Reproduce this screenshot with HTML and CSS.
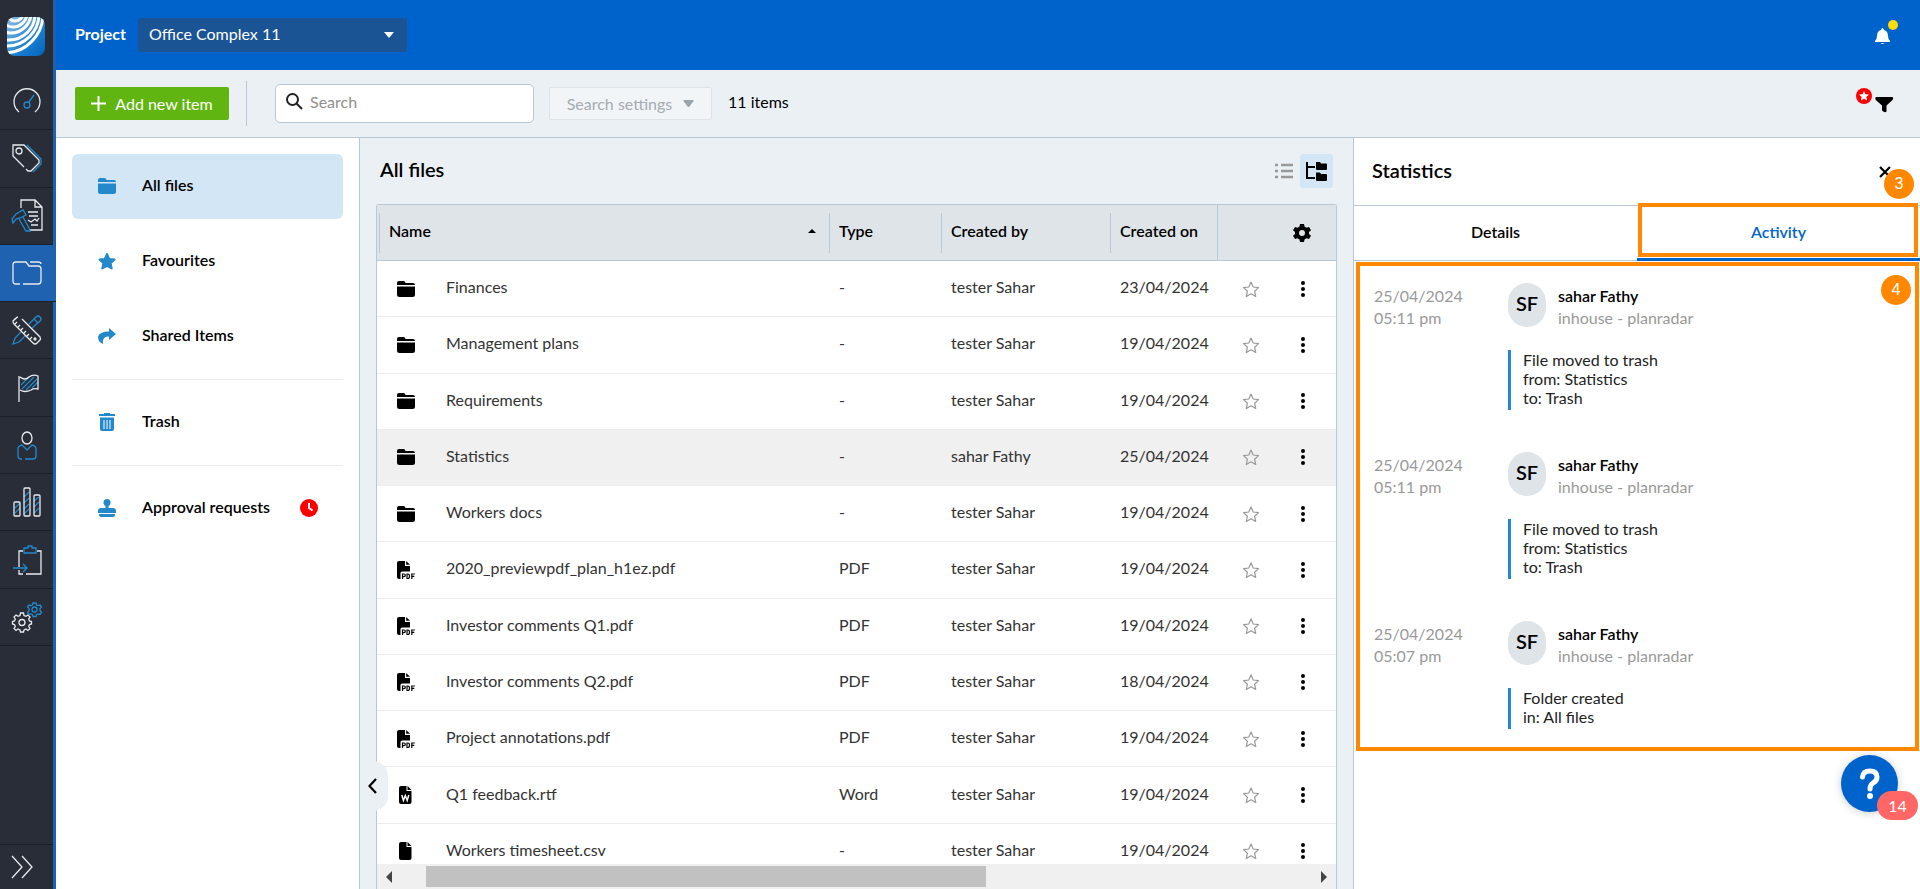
FILE: index.html
```html
<!DOCTYPE html>
<html lang="en">
<head>
    <meta charset="UTF-8">
    <meta name="viewport" content="width=device-width, initial-scale=1.0">
    <title>Office Complex 11 - All files</title>
    <link rel="stylesheet" href="styles.css">
</head>
<body>

<!-- shared icons -->
<svg class="sprite" aria-hidden="true">
    <symbol id="i-folder" viewBox="0 0 18 16">
        <path d="M0 4V2Q0 0 2 0H6.500Q7.500 0 8 1L8.500 2H16Q18 2 18 4Z"/>
        <path d="M0 5.500H18V13.500Q18 16 15.500 16H2.500Q0 16 0 13.500Z"/>
    </symbol>
    <symbol id="i-pdf" viewBox="0 0 18 18">
        <path d="M2 0H8V5H13V10.500H5Q3.500 10.500 3.500 12V18H2Q0 18 0 16V2Q0 0 2 0Z"/>
        <path d="M9.200 0L13 3.800H9.200Z"/>
        <path d="M5.500 18V13H7Q8.300 13 8.300 14.300Q8.300 15.600 7 15.600H5.500M10 13H11Q12.500 13 12.500 15.200Q12.500 17.500 11 17.500H10ZM14.800 18V13H17.800M14.800 15.300H17.300" fill="none" stroke="#000" stroke-width="1.200"/>
    </symbol>
    <symbol id="i-word" viewBox="0 0 18 18">
        <path d="M4 0H9.500V5H14.500V16Q14.500 18 12.500 18H4Q2 18 2 16V2Q2 0 4 0Z"/>
        <path d="M10.500 0L14.500 4H10.500Z"/>
        <path d="M4.800 9L6.400 14.500L8.300 9.500L10.200 14.500L11.800 9" fill="none" stroke="#fff" stroke-width="1.500"/>
    </symbol>
    <symbol id="i-file" viewBox="0 0 18 18">
        <path d="M4 0H9.500V5H14.500V16Q14.500 18 12.500 18H4Q2 18 2 16V2Q2 0 4 0Z"/>
        <path d="M10.500 0L14.500 4H10.500Z"/>
    </symbol>
    <symbol id="i-star" viewBox="0 0 18 18">
        <path d="M9 2L11.200 7L16.500 7.600L12.600 11.200L13.700 16.500L9 13.800L4.300 16.500L5.400 11.200L1.500 7.600L6.800 7Z" stroke-linejoin="round"/>
    </symbol>
    <symbol id="i-dots" viewBox="0 0 6 16">
        <circle cx="3" cy="2" r="2"/><circle cx="3" cy="8" r="2"/><circle cx="3" cy="14" r="2"/>
    </symbol>
    <symbol id="i-gear" viewBox="0 0 18 18">
        <path fill-rule="evenodd" d="M7 0H11L11.500 2.600L13.500 3.700L16 2.900L18 6.200L16 8V10L18 11.800L16 15.100L13.500 14.300L11.500 15.400L11 18H7L6.500 15.400L4.500 14.300L2 15.100L0 11.800L2 10V8L0 6.200L2 2.900L4.500 3.700L6.500 2.600ZM9 6A3 3 0 1 0 9 12A3 3 0 1 0 9 6Z"/>
    </symbol>
</svg>

<div class="app">
    <nav class="sidebar" aria-label="Main">
        <a class="logo" href="#" aria-label="Home">
            <svg width="38" height="39" viewBox="0 0 38 39">
                <defs>
                    <clipPath id="logoClip"><rect width="38" height="39" rx="8"/></clipPath>
                    <linearGradient id="logoFill" x1="0" y1="0" x2="1" y2="1">
                        <stop offset="0" stop-color="#8fc0e8"/><stop offset="0.600" stop-color="#1a7fcf"/><stop offset="1" stop-color="#0064c0"/>
                    </linearGradient>
                </defs>
                <g clip-path="url(#logoClip)">
                    <rect width="38" height="39" fill="url(#logoFill)"/>
                    <g fill="none" stroke="#fff" stroke-width="3">
                        <circle cx="8" cy="-4" r="8"/>
                        <circle cx="6" cy="-4" r="14"/>
                        <circle cx="4" cy="-4" r="20"/>
                        <circle cx="2" cy="-3" r="26"/>
                        <circle cx="0" cy="-3" r="32"/>
                        <circle cx="-3" cy="-3" r="39"/>
                    </g>
                </g>
            </svg>
        </a>
        <ul class="menu">
            <li><a href="#" aria-label="Dashboard"><svg width="30" height="30" viewBox="0 0 30 30">
                <path d="M7 26A13 13 0 1 1 23 26M4.500 23L6 25"/>
                <g class="blue"><circle cx="15" cy="19" r="3"/><path d="M16.500 16.500L22 9"/></g></svg></a></li>
            <li><a href="#" aria-label="Tickets"><svg width="30" height="30" viewBox="0 0 30 30">
                <path d="M12 24L1 13V2H12L27 17V20L19 28H16L14 26"/><circle cx="7" cy="8" r="3"/>
                <g class="blue"><path d="M15 2L29 16V21L21 29"/></g></svg></a></li>
            <li><a href="#" aria-label="Defects"><svg width="32" height="32" viewBox="0 0 32 32">
                <path d="M10 8V0H24L31 7V30H19M24 0V7H31M17 12H27M18 16H27M17 20L20 22L24 19L26 21L28 18M20 25H27"/>
                <g class="blue"><path d="M1 19L5 14L12 10L15 15L9 18L5 19L2 23ZM8 19L15 31L19 31L18 28L12 17"/></g></svg></a></li>
            <li class="active"><a href="#" aria-label="Files"><svg width="30" height="30" viewBox="0 0 30 30">
                <path d="M8 26H4Q1 26 1 23V7Q1 4 4 4H14L17 8H26Q29 8 29 11V23Q29 26 26 26H11M18 4H26Q29 4 29 6"/></svg></a></li>
            <li><a href="#" aria-label="Plans"><svg width="30" height="30" viewBox="0 0 30 30">
                <g class="blue"><path d="M17 9L24 2Q26 0 28 2Q30 4 28 6L20 13M9 17L3 23L1 29L7 27L13 21M22 4L26 8"/></g>
                <path d="M6 2Q5 2 1 6Q1 8 2 9L21 28Q23 30 25 28L28 25Q29 24 28 22L10 4M3 9L5 7M6 12L8 10M9 15L11 13M12 18L14 16M15 21L17 19M18 24L20 22"/><circle cx="23" cy="24" r="1"/></svg></a></li>
            <li><a href="#" aria-label="Tasks"><svg width="30" height="30" viewBox="0 0 30 30">
                <g class="blue"><path d="M9 12L17 4M10 16L22 4M14 17L25 6M20 15L26 9"/></g>
                <path d="M7 29V3M8 4Q13 8 17 4Q21 1 26 3V16Q22 15 19 17Q13 20 8 17"/></svg></a></li>
            <li><a href="#" aria-label="Users"><svg width="30" height="30" viewBox="0 0 30 30">
                <ellipse cx="15" cy="8" rx="5" ry="6"/>
                <g class="blue"><path d="M10 29H9Q6 29 6 26V19Q6 16 10 15L15 20L20 15Q24 16 24 19V26Q24 29 21 29H13"/></g></svg></a></li>
            <li><a href="#" aria-label="Statistics"><svg width="30" height="30" viewBox="0 0 30 30">
                <g class="blue"><path d="M3 21L8 16M3 26L8 21M12 10L17 5M12 16L17 11M12 22L17 17M12 27L17 22M22 14L27 10M22 20L27 15M22 26L27 21"/></g>
                <rect x="2" y="15" width="6" height="14" rx="1"/><rect x="12" y="1" width="6" height="28" rx="1"/><rect x="22" y="8" width="6" height="21" rx="1"/></svg></a></li>
            <li><a href="#" aria-label="Export"><svg width="30" height="30" viewBox="0 0 30 30">
                <path d="M11 6H7V22M7 25V29H11M14 29H29V6H25"/>
                <g class="blue"><path d="M12 3H16V1H20V3H24V8H12ZM1 23H14M11 19L15 23L11 27"/></g></svg></a></li>
            <li><a href="#" aria-label="Settings"><svg width="30" height="30" viewBox="0 0 30 30">
                <path d="M8.500 11H11.500L12 13.500L14 14.300L16 13L18 15L16.700 17L17.500 19L19.500 19.500V22L17.500 22.500L16.700 24.500L18 26.500L16 28.500L14 27L12 28L11.500 30H8.500L8 28L6 27L4 28.500L2 26.500L3.300 24.500L2.500 22.500L0.500 22V19.500L2.500 19L3.300 17L2 15L4 13L6 14.300L8 13.500Z"/><circle cx="10" cy="20.500" r="3"/>
                <g class="blue"><path d="M21 1H24L24.500 3L26 3.500L28 3L29.500 5L28 6.500V8.500L29.500 10.500L28 12.500L26 12L24.500 12.500L24 14.500H21L20.500 12.500L19 12L17 12.500L15.500 10.500L17 8.500V6.500L15.500 5L17 3L19 3.500L20.500 3Z"/><circle cx="22.500" cy="7.500" r="2.500"/></g></svg></a></li>
        </ul>
        <button class="expand" type="button" aria-label="Expand menu">
            <svg width="24" height="24" viewBox="0 0 24 24"><path d="M2 1L12 12L2 23M12 1L22 12L12 23"/></svg>
        </button>
    </nav>

    <div class="page">
        <header class="header">
            <label for="project">Project</label>
            <div class="select-wrap">
                <select id="project"><option>Office Complex 11</option></select>
                <svg width="10" height="6" viewBox="0 0 10 6"><path d="M0 0H10L5 6Z"/></svg>
            </div>
            <button class="bell" type="button" aria-label="Notifications">
                <svg width="23" height="25" viewBox="0 0 23 25">
                    <path d="M7.500 8Q8.500 8 9 10Q13 11 13 16Q13 19 15 21V22H0V21Q2 19 2 16Q2 11 6 10Q6.500 8 7.500 8ZM5.500 23H9.500Q7.500 25 5.500 23Z" fill="#fff"/>
                    <circle cx="18" cy="5" r="5" fill="#ffdb0a"/>
                </svg>
            </button>
        </header>

        <div class="toolbar">
            <button class="add" type="button">
                <svg width="15" height="15" viewBox="0 0 15 15"><path d="M7.500 0V15M0 7.500H15" stroke="#fff" stroke-width="2"/></svg>
                Add new item
            </button>
            <span class="split"></span>
            <label class="search">
                <svg width="17" height="17" viewBox="0 0 17 17"><circle cx="6.500" cy="6.500" r="5.500"/><path d="M10.500 10.500L16 16"/></svg>
                <input type="text" placeholder="Search" aria-label="Search">
            </label>
            <button class="settings" type="button" disabled>
                Search settings
                <svg width="11" height="7" viewBox="0 0 11 7"><path d="M1 0H10Q11 0 10.500 1L6.500 6.500Q5.500 7.500 4.500 6.500L0.500 1Q0 0 1 0Z" fill="#9aa2aa"/></svg>
            </button>
            <span class="total">11 items</span>
            <button class="filter" type="button" aria-label="Filter">
                <svg width="38" height="26" viewBox="0 0 38 26">
                    <circle cx="8" cy="8" r="8" fill="#f00"/>
                    <path d="M8 3L9.500 6.200L13 6.600L10.400 9L11.100 12.500L8 10.800L4.900 12.500L5.600 9L3 6.600L6.500 6.200Z" fill="#fff"/>
                    <path d="M20 9H36.500Q38 10 36.500 12L30.500 17.500V23.500Q29 25.500 26 22.500V17.500L19.800 12Q18.500 10 20 9Z"/>
                </svg>
            </button>
        </div>

        <div class="content">
            <aside class="folders">
                <a class="folder current" href="#"><svg width="18" height="16"><use href="#i-folder"/></svg><span>All files</span></a>
                <a class="folder" href="#"><svg class="solid" width="18" height="18"><use href="#i-star"/></svg><span>Favourites</span></a>
                <a class="folder" href="#"><svg width="18" height="16" viewBox="0 0 18 16"><path d="M11 0L18 6L11 12V8.500Q4 8 5 16Q0 14 0 9Q1 3.500 11 3.500Z"/></svg><span>Shared Items</span></a>
                <hr>
                <a class="folder" href="#"><svg width="18" height="18" viewBox="0 0 18 18"><path d="M1 1H6V0H12V1H17V3H1Z"/><path d="M2 4.500H16V16Q16 18 14 18H4Q2 18 2 16Z"/><path d="M6 7V16M9 7V16M12 7V16" stroke="#fff" stroke-width="1"/></svg><span>Trash</span></a>
                <hr>
                <a class="folder" href="#"><svg width="18" height="18" viewBox="0 0 18 18"><circle cx="9" cy="3.500" r="3.500"/><path d="M7.500 5H10.500V9H15Q18 9 18 12V14H0V12Q0 9 3 9H7.500ZM1 15H17V16Q17 18 15 18H3Q1 18 1 16Z"/></svg><span>Approval requests</span>
                    <svg class="clock" width="18" height="18" viewBox="0 0 18 18"><circle cx="9" cy="9" r="9" fill="#f00"/><path d="M9 4V9L12.500 11.500" fill="none" stroke="#fff" stroke-width="2"/></svg></a>
            </aside>

            <main class="files">
                <button class="collapse" type="button" aria-label="Hide folders">
                    <svg width="9" height="16" viewBox="0 0 9 16"><path d="M8 1L1.500 8L8 15"/></svg>
                </button>
                <div class="files-head">
                    <h1>All files</h1>
                    <button class="view" type="button" aria-label="List view">
                        <svg width="18" height="16" viewBox="0 0 18 16"><path d="M0 2H3M6 2H18M0 8H3M6 8H18M0 14H3M6 14H18" stroke="#999" stroke-width="2.500"/></svg>
                    </button>
                    <button class="view on" type="button" aria-label="Tree view">
                        <svg width="21" height="19" viewBox="0 0 21 19"><path d="M1 0V16H9M1 5H9" fill="none" stroke="#000" stroke-width="2"/><path d="M10 0H14L15 1.500H20Q21 1.500 21 2.500V7Q21 8 20 8H11Q10 8 10 7ZM10 10.500H14L15 12H20Q21 12 21 13V18Q21 19 20 19H11Q10 19 10 18Z"/></svg>
                    </button>
                </div>
                <div class="grid">
                    <div class="grid-body">
                        <table>
                            <colgroup><col class="c-icon"><col><col class="c-type"><col class="c-by"><col class="c-on"><col class="c-star"><col class="c-menu"></colgroup>
                            <thead>
                                <tr>
                                    <th colspan="2"><span class="th">Name <svg width="8" height="4" viewBox="0 0 8 4"><path d="M0 4H8L4 0Z"/></svg></span></th>
                                    <th><span class="th">Type</span></th>
                                    <th><span class="th">Created by</span></th>
                                    <th><span class="th">Created on</span></th>
                                    <th class="actions" colspan="2"><button type="button" aria-label="Columns"><svg width="18" height="18"><use href="#i-gear"/></svg></button></th>
                                </tr>
                            </thead>
                            <tbody>
                                <tr><td class="ico"><svg width="18" height="16"><use href="#i-folder"/></svg></td><td>Finances</td><td>-</td><td>tester Sahar</td><td>23/04/2024</td>
                                    <td class="act"><button type="button" aria-label="Favourite"><svg class="star" width="18" height="18"><use href="#i-star"/></svg></button></td><td class="act more"><button type="button" aria-label="More"><svg width="6" height="16"><use href="#i-dots"/></svg></button></td></tr>
                                <tr><td class="ico"><svg width="18" height="16"><use href="#i-folder"/></svg></td><td>Management plans</td><td>-</td><td>tester Sahar</td><td>19/04/2024</td>
                                    <td class="act"><button type="button" aria-label="Favourite"><svg class="star" width="18" height="18"><use href="#i-star"/></svg></button></td><td class="act more"><button type="button" aria-label="More"><svg width="6" height="16"><use href="#i-dots"/></svg></button></td></tr>
                                <tr><td class="ico"><svg width="18" height="16"><use href="#i-folder"/></svg></td><td>Requirements</td><td>-</td><td>tester Sahar</td><td>19/04/2024</td>
                                    <td class="act"><button type="button" aria-label="Favourite"><svg class="star" width="18" height="18"><use href="#i-star"/></svg></button></td><td class="act more"><button type="button" aria-label="More"><svg width="6" height="16"><use href="#i-dots"/></svg></button></td></tr>
                                <tr class="selected"><td class="ico"><svg width="18" height="16"><use href="#i-folder"/></svg></td><td>Statistics</td><td>-</td><td>sahar Fathy</td><td>25/04/2024</td>
                                    <td class="act"><button type="button" aria-label="Favourite"><svg class="star" width="18" height="18"><use href="#i-star"/></svg></button></td><td class="act more"><button type="button" aria-label="More"><svg width="6" height="16"><use href="#i-dots"/></svg></button></td></tr>
                                <tr><td class="ico"><svg width="18" height="16"><use href="#i-folder"/></svg></td><td>Workers docs</td><td>-</td><td>tester Sahar</td><td>19/04/2024</td>
                                    <td class="act"><button type="button" aria-label="Favourite"><svg class="star" width="18" height="18"><use href="#i-star"/></svg></button></td><td class="act more"><button type="button" aria-label="More"><svg width="6" height="16"><use href="#i-dots"/></svg></button></td></tr>
                                <tr><td class="ico"><svg width="18" height="18"><use href="#i-pdf"/></svg></td><td>2020_previewpdf_plan_h1ez.pdf</td><td>PDF</td><td>tester Sahar</td><td>19/04/2024</td>
                                    <td class="act"><button type="button" aria-label="Favourite"><svg class="star" width="18" height="18"><use href="#i-star"/></svg></button></td><td class="act more"><button type="button" aria-label="More"><svg width="6" height="16"><use href="#i-dots"/></svg></button></td></tr>
                                <tr><td class="ico"><svg width="18" height="18"><use href="#i-pdf"/></svg></td><td>Investor comments Q1.pdf</td><td>PDF</td><td>tester Sahar</td><td>19/04/2024</td>
                                    <td class="act"><button type="button" aria-label="Favourite"><svg class="star" width="18" height="18"><use href="#i-star"/></svg></button></td><td class="act more"><button type="button" aria-label="More"><svg width="6" height="16"><use href="#i-dots"/></svg></button></td></tr>
                                <tr><td class="ico"><svg width="18" height="18"><use href="#i-pdf"/></svg></td><td>Investor comments Q2.pdf</td><td>PDF</td><td>tester Sahar</td><td>18/04/2024</td>
                                    <td class="act"><button type="button" aria-label="Favourite"><svg class="star" width="18" height="18"><use href="#i-star"/></svg></button></td><td class="act more"><button type="button" aria-label="More"><svg width="6" height="16"><use href="#i-dots"/></svg></button></td></tr>
                                <tr><td class="ico"><svg width="18" height="18"><use href="#i-pdf"/></svg></td><td>Project annotations.pdf</td><td>PDF</td><td>tester Sahar</td><td>19/04/2024</td>
                                    <td class="act"><button type="button" aria-label="Favourite"><svg class="star" width="18" height="18"><use href="#i-star"/></svg></button></td><td class="act more"><button type="button" aria-label="More"><svg width="6" height="16"><use href="#i-dots"/></svg></button></td></tr>
                                <tr><td class="ico"><svg width="18" height="18"><use href="#i-word"/></svg></td><td>Q1 feedback.rtf</td><td>Word</td><td>tester Sahar</td><td>19/04/2024</td>
                                    <td class="act"><button type="button" aria-label="Favourite"><svg class="star" width="18" height="18"><use href="#i-star"/></svg></button></td><td class="act more"><button type="button" aria-label="More"><svg width="6" height="16"><use href="#i-dots"/></svg></button></td></tr>
                                <tr><td class="ico"><svg width="18" height="18"><use href="#i-file"/></svg></td><td>Workers timesheet.csv</td><td>-</td><td>tester Sahar</td><td>19/04/2024</td>
                                    <td class="act"><button type="button" aria-label="Favourite"><svg class="star" width="18" height="18"><use href="#i-star"/></svg></button></td><td class="act more"><button type="button" aria-label="More"><svg width="6" height="16"><use href="#i-dots"/></svg></button></td></tr>
                            </tbody>
                        </table>
                    </div>
                    <div class="scrollbar">
                        <svg width="6" height="12" viewBox="0 0 6 12"><path d="M6 0V12L0 6Z"/></svg>
                        <div class="track"><div class="thumb"></div></div>
                        <svg width="6" height="12" viewBox="0 0 6 12"><path d="M0 0V12L6 6Z"/></svg>
                    </div>
                </div>
            </main>

            <section class="details">
                <div class="details-head">
                    <h2>Statistics</h2>
                    <button type="button" aria-label="Close"><svg width="12" height="12" viewBox="0 0 12 12"><path d="M1 1L11 11M11 1L1 11"/></svg></button>
                </div>
                <div class="tabs">
                    <button type="button">Details</button>
                    <button class="active" type="button">Activity<span class="mark mark-tab"></span></button>
                </div>
                <span class="step step-3">3</span>
                <div class="activity">
                    <span class="mark"></span>
                    <span class="step step-4">4</span>
                    <article class="entry">
                        <div class="when">25/04/2024<br>05:11 pm</div>
                        <div class="avatar">SF</div>
                        <div class="who"><b>sahar Fathy</b><br>inhouse - planradar</div>
                        <p>File moved to trash<br>from: Statistics<br>to: Trash</p>
                    </article>
                    <article class="entry">
                        <div class="when">25/04/2024<br>05:11 pm</div>
                        <div class="avatar">SF</div>
                        <div class="who"><b>sahar Fathy</b><br>inhouse - planradar</div>
                        <p>File moved to trash<br>from: Statistics<br>to: Trash</p>
                    </article>
                    <article class="entry">
                        <div class="when">25/04/2024<br>05:07 pm</div>
                        <div class="avatar">SF</div>
                        <div class="who"><b>sahar Fathy</b><br>inhouse - planradar</div>
                        <p>Folder created<br>in: All files</p>
                    </article>
                </div>
            </section>
        </div>
    </div>
</div>

<button class="help" type="button" aria-label="Help, 14 new">
    <svg width="20" height="30" viewBox="0 0 20 30"><path d="M2.500 8Q3 2 10 2Q17 2 17 8Q17 12 13 14Q10 16 10 20" fill="none" stroke="#fff" stroke-width="5" stroke-linecap="round"/><circle cx="10" cy="27" r="3" fill="#fff"/></svg>
    <span class="count">14</span>
</button>

</body>
</html>
```
FILE: styles.css
```css
* {
    box-sizing: border-box;
}
body {
    margin: 0;
    font-family: Lato, "Liberation Sans", sans-serif;
    font-size: 16px;
    line-height: 22px;
    color: #000;
    background: #ebf0f5;
}
button, input, select {
    font: inherit;
    color: inherit;
    border: none;
    background: none;
    padding: 0;
    margin: 0;
}
button {
    cursor: pointer;
}
svg {
    display: block;
    overflow: visible;
    flex: none;
}
a {
    color: inherit;
    text-decoration: none;
}
h1, h2 {
    margin: 0;
    padding-bottom: 4px;
    font-size: 20px;
    line-height: 24px;
    font-weight: 600;
}
.sprite {
    position: absolute;
    width: 0;
    height: 0;
}
.app {
    display: flex;
    height: 100vh;
    overflow: hidden;
}

/* left icon bar */
.sidebar {
    width: 56px;
    flex: none;
    display: flex;
    flex-direction: column;
    background: #282d38;
    border-right: 3px solid #1f63b0;
}
.logo {
    height: 73px;
    padding: 17px 0 0 7px;
}
.menu {
    list-style: none;
    margin: 0;
    padding: 0;
    height: 573px;
    display: flex;
    flex-direction: column;
}
.menu li {
    flex: 1;
    border-bottom: 1px solid #1b1f28;
}
.menu a {
    height: 100%;
    width: 53px;
    display: flex;
    align-items: center;
    justify-content: center;
}
.menu svg, .expand svg {
    fill: none;
    stroke: #e8eaee;
    stroke-width: 1.3;
}
.menu .blue {
    stroke: #2389cb;
}
.menu .active {
    background: #1f63b0;
    margin-right: -3px;
}
.expand {
    margin-top: auto;
    height: 45px;
    border-top: 1px solid #1b1f28;
    padding-left: 10px;
}

/* header */
.page {
    flex: 1;
    min-width: 0;
    display: flex;
    flex-direction: column;
}
.header {
    height: 70px;
    flex: none;
    padding: 0 22px 0 19px;
    display: flex;
    align-items: center;
    gap: 12px;
    background: #0063cc;
    color: #fff;
}
.header label {
    font-weight: 700;
    padding-bottom: 2px;
}
.select-wrap {
    width: 269px;
    height: 34px;
    padding: 0 13px 0 11px;
    display: flex;
    align-items: center;
    background: #1a5494;
    border-radius: 3px;
    fill: #fff;
}
.select-wrap select {
    flex: 1;
    appearance: none;
    padding-bottom: 2px;
}
.select-wrap option {
    color: #000;
}
.bell {
    margin-left: auto;
    height: 30px;
    display: flex;
}

/* toolbar */
.toolbar {
    height: 68px;
    flex: none;
    padding: 0 26px 0 19px;
    display: flex;
    align-items: center;
    border-bottom: 1px solid #bac7d5;
}
.add {
    width: 154px;
    height: 33px;
    display: flex;
    align-items: center;
    justify-content: center;
    gap: 9px;
    background: #61b510;
    color: #fff;
    border-radius: 2px;
}
.split {
    width: 1px;
    height: 45px;
    margin: 0 28px 0 17px;
    background: #bac7d5;
}
.search {
    width: 259px;
    height: 39px;
    padding: 0 10px 4px;
    margin-right: 15px;
    display: flex;
    align-items: center;
    gap: 7px;
    background: #fff;
    border: 1px solid #bac7d5;
    border-radius: 5px;
}
.search svg {
    fill: none;
    stroke: #222;
    stroke-width: 2;
}
.search input {
    flex: 1;
    min-width: 0;
    outline: none;
}
.search input::placeholder {
    color: #8f8f8f;
}
.settings {
    width: 163px;
    height: 33px;
    margin-right: 16px;
    display: flex;
    align-items: center;
    justify-content: center;
    gap: 11px;
    background: #f1f5f8;
    border: 1px solid #dee3e8;
    border-radius: 2px;
    color: #a6abb0;
}
.total {
    padding-bottom: 3px;
}
.filter {
    margin-left: auto;
    padding-bottom: 6px;
}

/* folder list */
.content {
    flex: 1;
    min-height: 0;
    display: flex;
}
.folders {
    width: 304px;
    flex: none;
    padding: 16px;
    display: flex;
    flex-direction: column;
    gap: 10px;
    background: #fff;
    border-right: 1px solid #bac7d5;
}
.folders hr {
    width: 100%;
    height: 1px;
    margin: 0;
    border: none;
    background: #ebebeb;
}
.folder {
    height: 65px;
    padding: 0 25px 2px 26px;
    display: flex;
    align-items: center;
    gap: 26px;
    border-radius: 6px;
    font-weight: 600;
    fill: #2389cb;
}
.folder span {
    padding-bottom: 1px;
}
.folder .solid {
    stroke: #2389cb;
    stroke-width: 2;
}
.folder.current {
    background: #d3e6f5;
}
.clock {
    margin-left: auto;
}

/* file table */
.files {
    flex: 1;
    min-width: 0;
    padding: 0 16px;
    position: relative;
    display: flex;
    flex-direction: column;
}
.files-head {
    height: 66px;
    flex: none;
    padding: 0 4px;
    display: flex;
    align-items: center;
}
.files-head h1 {
    flex: 1;
}
.view {
    width: 33px;
    height: 34px;
    display: flex;
    align-items: center;
    justify-content: center;
    border-radius: 3px;
}
.view.on {
    background: #d3e6f5;
}
.grid {
    flex: 1;
    min-height: 0;
    display: flex;
    flex-direction: column;
    background: #fff;
    border: 1px solid #bac7d5;
    border-bottom: none;
    border-radius: 3px 3px 0 0;
}
.grid-body {
    flex: 1;
    min-height: 0;
    overflow: hidden;
}
table {
    width: 100%;
    height: 675px;
    table-layout: fixed;
    border-collapse: separate;
    border-spacing: 0;
}
.c-icon { width: 59px; }
.c-type { width: 112px; }
.c-by { width: 169px; }
.c-on { width: 107px; }
.c-star { width: 68px; }
.c-menu { width: 51px; }
th {
    height: 56px;
    padding: 0;
    text-align: left;
    font-weight: 600;
    background: #dfe4e8;
    border-bottom: 1px solid #bac7d5;
}
th:first-child {
    padding-left: 2px;
}
.th {
    height: 40px;
    padding: 0 13px 3px 9px;
    display: flex;
    align-items: center;
    justify-content: space-between;
    border-left: 1px solid #bac7d5;
}
th.actions {
    border-left: 1px solid #bac7d5;
}
.actions button {
    margin-left: auto;
    margin-right: 25px;
    display: block;
}
td {
    height: 56px;
    padding: 0 10px 3px;
    color: #333;
    white-space: nowrap;
    border-bottom: 1px solid #ededed;
}
td.ico {
    padding: 0 0 0 20px;
}
td.act {
    padding: 0;
}
td.more {
    padding-right: 16px;
}
.act button {
    width: 100%;
    display: flex;
    justify-content: center;
}
.act .star {
    fill: none;
    stroke: #999;
    stroke-width: 1.2;
}
.selected td {
    background: #f0f0f0;
}
.scrollbar {
    height: 25px;
    flex: none;
    padding: 0 9px;
    display: flex;
    align-items: center;
    gap: 34px;
    background: #f0f0f0;
    fill: #444;
}
.track {
    flex: 1;
}
.thumb {
    width: 65%;
    height: 21px;
    background: #c1c1c1;
}
.collapse {
    position: absolute;
    left: 0;
    bottom: 78px;
    width: 28px;
    height: 50px;
    padding-left: 8px;
    background: #ebf0f5;
    border-radius: 0 15px 15px 0;
}
.collapse svg, .details-head svg {
    fill: none;
    stroke: #000;
    stroke-width: 2.2;
}

/* details panel */
.details {
    width: 567px;
    flex: none;
    position: relative;
    background: #fff;
    border-left: 1px solid #bac7d5;
}
.details-head {
    height: 68px;
    padding: 0 29px 0 18px;
    display: flex;
    align-items: center;
    justify-content: space-between;
    border-bottom: 1px solid #bac7d5;
}
.tabs {
    height: 55px;
    display: flex;
    border-bottom: 1px solid #bac7d5;
}
.tabs button {
    flex: 1;
    position: relative;
    padding-bottom: 2px;
    font-weight: 600;
}
.tabs .active {
    color: #0063cc;
    margin-bottom: -1px;
    padding-bottom: 0;
    border-bottom: 3px solid #0063cc;
}
.mark {
    position: absolute;
    inset: 1px 1px 1px 2px;
    border: 4px solid #ff8800;
    pointer-events: none;
}
.mark-tab {
    inset: -3px 2px 1px 1px;
}
.step {
    position: absolute;
    width: 30px;
    height: 30px;
    line-height: 30px;
    border-radius: 50%;
    text-align: center;
    font-family: "Liberation Sans", Arial, sans-serif;
    background: #ff8800;
    color: #fff;
}
.step-3 {
    top: 31px;
    right: 6px;
}
.step-4 {
    top: 14px;
    right: 9px;
}
.activity {
    position: relative;
    padding: 22px 20px 23px;
    display: flex;
    flex-direction: column;
    gap: 42px;
}
.entry {
    display: grid;
    grid-template-columns: 134px 38px 1fr;
    row-gap: 21px;
}
.when, .who {
    padding-top: 2px;
    color: #999;
}
.who {
    padding-left: 12px;
}
.who b {
    font-weight: 600;
    color: #000;
}
.avatar {
    height: 44px;
    line-height: 40px;
    border-radius: 19px;
    text-align: center;
    font-size: 20px;
    font-weight: 600;
    background: #dfe4e8;
}
.entry p {
    grid-column: 2 / 4;
    margin: 0;
    padding: 0 0 3px 12px;
    line-height: 19px;
    color: #222;
    border-left: 3px solid #2389cb;
}

/* help button */
.help {
    position: fixed;
    right: 22px;
    bottom: 77px;
    width: 57px;
    height: 57px;
    display: flex;
    align-items: center;
    justify-content: center;
    border-radius: 50%;
    background: #0063cc;
    box-shadow: 0 1px 8px rgba(0, 0, 0, 0.2);
}
.count {
    position: absolute;
    left: 36px;
    top: 36px;
    width: 41px;
    height: 29px;
    line-height: 29px;
    border-radius: 15px;
    background: #ff6666;
    color: #fff;
}
```
